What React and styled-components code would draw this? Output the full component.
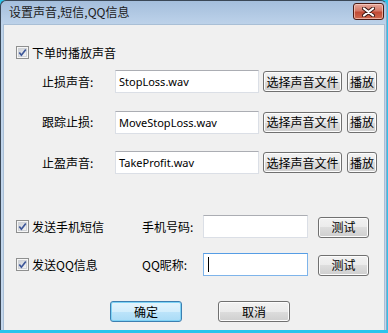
import React from "react";
import styled, { createGlobalStyle } from "styled-components";

const GlobalStyle = createGlobalStyle`
  body {
    margin: 0;
    background: #2cc4ec;
    font-family: "Noto Sans CJK SC", "Noto Sans", sans-serif;
    font-size: 12px;
    color: #000;
  }
`;
const Desktop = styled.div`
  width: 388px;
  height: 333px;
  overflow: hidden;
`;
const Window = styled.div`
  width: 385px;
  height: 329px;
  border: 1px solid #3a4756;
  border-right-color: #8fa9c6;
  border-bottom: none;
  border-radius: 6px 6px 0 0;
  background: linear-gradient(#a4bedc, #bed3ea 24px, #c4d7ec);
  display: flex;
  flex-direction: column;
`;
const TitleBar = styled.div`
  height: 23px;
  display: flex;
  align-items: center;
  justify-content: space-between;
  padding: 0 2px 0 8px;
`;
const Title = styled.span`
  font-size: 12px;
  color: #1b1b1b;
  line-height: 14px;
  margin-top: -1px;
`;
const CloseButton = styled.div`
  width: 29px;
  height: 15px;
  margin-top: -2px;
  border: 1px solid #4a1a14;
  border-radius: 3px;
  background: linear-gradient(#e5a89d, #d47867 45%, #c24a35 55%, #cf6a50);
  box-shadow: inset 0 0 0 1px rgba(255, 220, 210, 0.6);
  display: flex;
  align-items: center;
  justify-content: center;
`;
const Client = styled.div`
  flex: 1;
  margin: 0 1px 0 2px;
  border: 1px solid #a9bfd6;
  border-bottom: none;
  background: #f0f0f0;
  display: flex;
  flex-direction: column;
`;
const CheckRow = styled.label`
  display: flex;
  align-items: center;
  gap: 3px;
  height: 13px;
  line-height: 13px;
  margin: ${(p) => (p.$flat ? "0" : "21px 0 0 12px")};
`;
const SoundGrid = styled.div`
  display: grid;
  grid-template-columns: 69px 144px 79px 30px;
  grid-auto-rows: 23px;
  column-gap: 4px;
  row-gap: 17.5px;
  align-items: center;
  margin: 11px 0 0 38px;
  & > :nth-child(4n) {
    margin-left: 1px;
  }
`;
const Label = styled.span`
  white-space: nowrap;
  line-height: 14px;
`;
const TextBox = styled.div`
  box-sizing: border-box;
  height: 23px;
  background: #fff;
  border: 1px solid ${(p) => (p.$focus ? "#7eb4ea" : "#dbdfe6")};
  border-top-color: ${(p) => (p.$focus ? "#569de5" : "#abadb3")};
  padding: 0 3px;
  display: flex;
  align-items: center;
  font-family: "Noto Sans", sans-serif;
  font-size: 11px;
  white-space: nowrap;
  overflow: hidden;
`;
const Caret = styled.span`
  width: 1px;
  height: 15px;
  background: #000;
  margin-left: 1px;
`;
const Button = styled.div`
  box-sizing: border-box;
  height: 21px;
  width: ${(p) => p.$w}px;
  border: 1px solid ${(p) => (p.$default ? "#3c7fb1" : "#707070")};
  border-radius: 3px;
  background: ${(p) =>
    p.$default
      ? "linear-gradient(#e5f4fc, #d3eefc 50%, #bde4fa 50%, #a9dbf6)"
      : "linear-gradient(#f2f2f2, #ebebeb 50%, #dddddd 50%, #cfcfcf)"};
  box-shadow: inset 0 0 0 1px ${(p) => (p.$default ? "#7fd3f5" : "#fcfcfc")};
  display: flex;
  align-items: center;
  justify-content: center;
  font-size: 12px;
  line-height: 14px;
  white-space: nowrap;
`;
const MsgGrid = styled.div`
  display: grid;
  grid-template-columns: 126px 61px 105px 51px;
  grid-auto-rows: 23px;
  row-gap: 15px;
  align-items: center;
  margin: 41px 0 0 12px;
  & > :nth-child(4n) {
    margin-left: 10px;
    margin-top: 1px;
  }
`;
const Actions = styled.div`
  display: flex;
  gap: 36px;
  margin: 25px 0 0 106px;
`;

const CheckBox = () => (
  <svg width="13" height="13" viewBox="0 0 13 13">
    <defs>
      <linearGradient id="cbg" x1="0" y1="0" x2="1" y2="1">
        <stop offset="0" stopColor="#cbcfd5" />
        <stop offset="1" stopColor="#f6f6f6" />
      </linearGradient>
    </defs>
    <rect x="0.5" y="0.5" width="12" height="12" fill="#f6f6f6" stroke="#8e8f8f" />
    <rect x="2.5" y="2.5" width="8" height="8" fill="url(#cbg)" stroke="#d0d3d8" />
    <path d="M3.3 6.4 L5.4 9.2 L9.8 3.4" fill="none" stroke="#3d5799" strokeWidth="1.7" />
  </svg>
);

const CloseGlyph = () => (
  <svg width="13" height="10" viewBox="0 0 13 10">
    <path d="M2 1.5 L11 8.5 M11 1.5 L2 8.5" stroke="#3a1712" strokeWidth="4" strokeLinecap="round" />
    <path d="M2 1.5 L11 8.5 M11 1.5 L2 8.5" stroke="#fff" strokeWidth="2.2" strokeLinecap="round" />
  </svg>
);

const sounds = [
  { label: "止损声音:", file: "StopLoss.wav" },
  { label: "跟踪止损:", file: "MoveStopLoss.wav" },
  { label: "止盈声音:", file: "TakeProfit.wav" },
];

const App = () => {
  return (
    <Desktop>
      <GlobalStyle />
      <Window>
        <TitleBar>
          <Title>设置声音,短信,QQ信息</Title>
          <CloseButton>
            <CloseGlyph />
          </CloseButton>
        </TitleBar>
        <Client>
          <CheckRow>
            <CheckBox />
            下单时播放声音
          </CheckRow>
          <SoundGrid>
            {sounds.map((s) => (
              <React.Fragment key={s.label}>
                <Label>{s.label}</Label>
                <TextBox>{s.file}</TextBox>
                <Button $w={79}>选择声音文件</Button>
                <Button $w={30}>播放</Button>
              </React.Fragment>
            ))}
          </SoundGrid>
          <MsgGrid>
            <CheckRow $flat>
              <CheckBox />
              发送手机短信
            </CheckRow>
            <Label>手机号码:</Label>
            <TextBox />
            <Button $w={51}>测试</Button>
            <CheckRow $flat>
              <CheckBox />
              发送QQ信息
            </CheckRow>
            <Label>QQ昵称:</Label>
            <TextBox $focus>
              <Caret />
            </TextBox>
            <Button $w={51}>测试</Button>
          </MsgGrid>
          <Actions>
            <Button $w={72} $default>
              确定
            </Button>
            <Button $w={72}>取消</Button>
          </Actions>
        </Client>
      </Window>
    </Desktop>
  );
};

export default App;
